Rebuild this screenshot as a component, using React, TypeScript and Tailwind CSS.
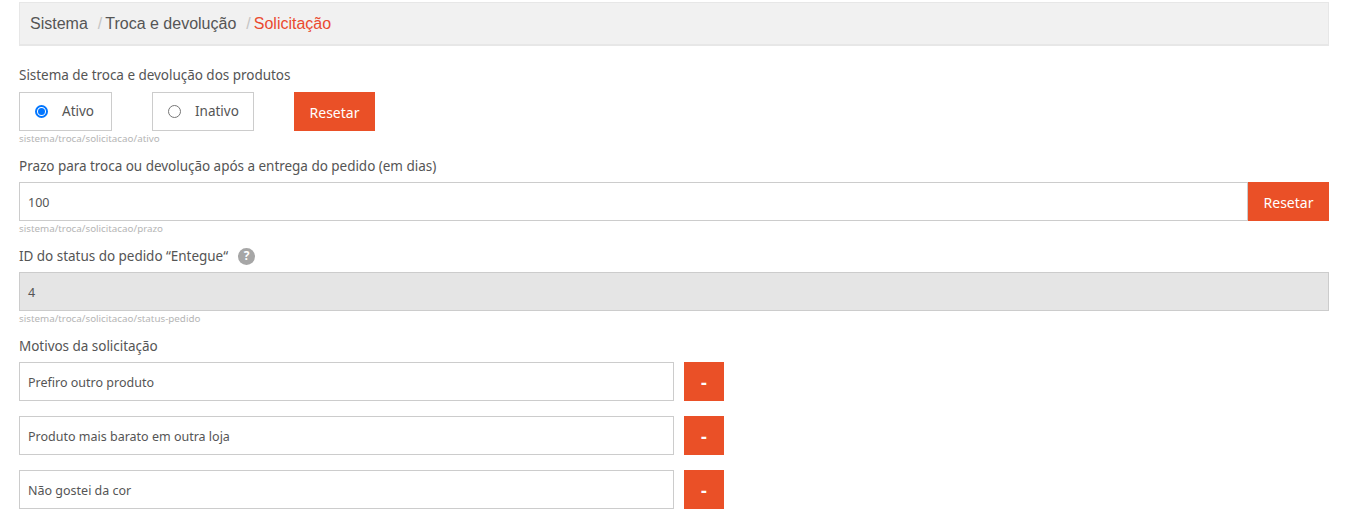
import React from "react";

const font = "font-['Noto_Sans',sans-serif]";
const label = "h-[18px] text-[13.5px] leading-[18px] text-[#555555] tracking-[-0.03px]";
const hint = "h-[14px] mt-[1px] text-[9.8px] leading-[14px] text-[#b5b5b5]";
const control = "h-[39px] border border-[#cccccc] text-[12.5px] text-[#555555] flex items-center";
const field = "pt-[3px]";
const btn = "h-[39px] bg-[#ea5027] text-white text-[14px] flex items-center justify-center pt-[1px]";

function Reason({ text }: { text: string }) {
  return (
    <div className="flex gap-[10px]">
      <div className={`${control} ${field} w-[655px] pl-[8px]`}>{text}</div>
      <div className={`${btn} w-[40px] font-bold text-[18px]`}>-</div>
    </div>
  );
}

export default function App() {
  return (
    <div className={`${font} bg-white h-[514px] overflow-hidden px-[19px] pr-[18px] pt-[2px]`}>
      <div className="h-[44px] bg-[#f1f1f1] border border-[#e7e7e7] border-b-2 flex items-center pl-[10px] font-['Liberation_Sans',sans-serif] text-[16px] text-[#555555]">
        <span>Sistema</span>
        <span className="ml-[10px] mr-[3px] text-[#c4c4c4]">/</span>
        <span>Troca e devolução</span>
        <span className="ml-[10px] mr-[3px] text-[#c4c4c4]">/</span>
        <span className="text-[#ea4a2f]">Solicitação</span>
      </div>

      <div className={`${label} mt-[20px]`}>Sistema de troca e devolução dos produtos</div>
      <div className="flex mt-[8px]">
        <div className={`${control} w-[93px] pl-[15px] gap-[14px] !text-[13.5px]`}>
          <span className="w-[13px] h-[13px] rounded-full border-2 border-[#0075ff] flex items-center justify-center">
            <span className="w-[7px] h-[7px] rounded-full bg-[#0075ff]" />
          </span>
          Ativo
        </div>
        <div className={`${control} w-[102px] ml-[40px] pl-[15px] gap-[14px] !text-[13.5px]`}>
          <span className="w-[13px] h-[13px] rounded-full border border-[#767676]" />
          Inativo
        </div>
        <div className={`${btn} w-[81px] ml-[40px]`}>Resetar</div>
      </div>
      <div className={hint}>sistema/troca/solicitacao/ativo</div>

      <div className={`${label} mt-[11px]`}>Prazo para troca ou devolução após a entrega do pedido (em dias)</div>
      <div className="flex mt-[7px]">
        <div className={`${control} ${field} flex-1 pl-[8px]`}>100</div>
        <div className={`${btn} w-[81px]`}>Resetar</div>
      </div>
      <div className={hint}>sistema/troca/solicitacao/prazo</div>

      <div className={`${label} mt-[11px] flex items-center gap-[10px]`}>
        <span>ID do status do pedido “Entegue“</span>
        <span className="w-[17px] h-[17px] rounded-full bg-[#a6a6a6] text-white text-[12px] font-bold flex items-center justify-center">?</span>
      </div>
      <div className={`${control} ${field} mt-[7px] bg-[#e5e5e5] pl-[8px]`}>4</div>
      <div className={hint}>sistema/troca/solicitacao/status-pedido</div>

      <div className={`${label} mt-[11px]`}>Motivos da solicitação</div>
      <div className="flex flex-col gap-[15px] mt-[7px]">
        <Reason text="Prefiro outro produto" />
        <Reason text="Produto mais barato em outra loja" />
        <Reason text="Não gostei da cor" />
      </div>
    </div>
  );
}
